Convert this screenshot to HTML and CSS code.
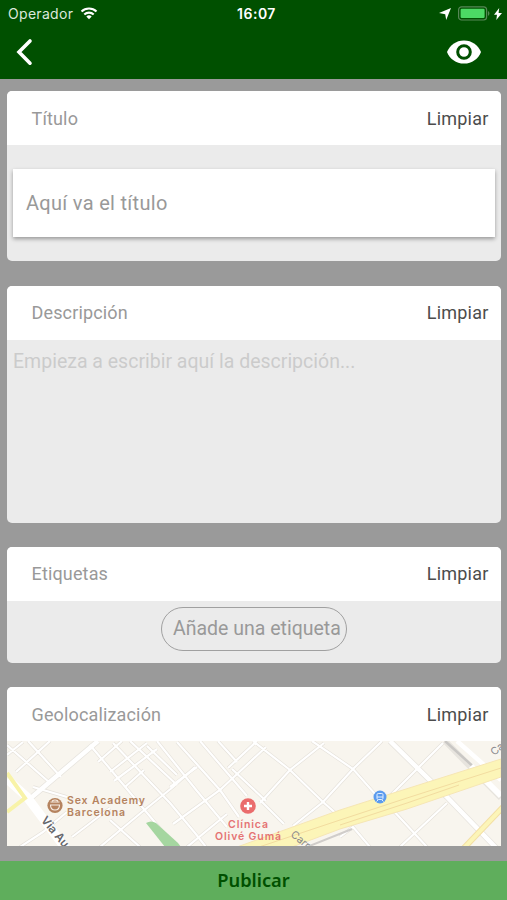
FILE: index.html
```
<!DOCTYPE html>
<html lang="es">
<head>
  <meta charset="UTF-8">
  <meta name="viewport" content="width=device-width, initial-scale=1">
  <title>Nueva publicación</title>
  <link rel="stylesheet" href="styles.css">
</head>
<body>
  <header class="header">
    <div class="status">
      <div class="status-left">
        <span class="carrier">Operador</span>
        <svg width="18" height="13" viewBox="0 0 17 13" fill="none" stroke="#fff" stroke-width="2.1">
          <path d="M1 4.6a10.8 10.8 0 0 1 15 0M3.8 7.5a6.8 6.8 0 0 1 9.4 0"/>
          <path d="M8.5 12.3L5.8 9.6a4 4 0 0 1 5.4 0z" fill="#fff" stroke="none"/>
        </svg>
      </div>
      <span class="time">16:07</span>
      <div class="status-right">
        <svg class="arrow" width="12" height="12" viewBox="0 0 12 12"><path d="M12 0L7.2 12 6.2 6.2 0 5z" fill="#fff"/></svg>
        <svg width="32" height="15" viewBox="0 0 32 15">
          <rect x=".6" y=".8" width="28" height="13.2" rx="3" fill="none" stroke="#578757" stroke-width="1.2"/>
          <rect x="2.6" y="2.8" width="24" height="9.2" rx="1.2" fill="#4cd964"/>
          <path d="M30 5v4.8c1.9-.7 1.9-4.1 0-4.8z" fill="#578757"/>
        </svg>
        <svg width="8" height="12" viewBox="0 0 8 12"><path d="M5.2 0L0 6.8h3L2.3 12 8 4.900H4.600z" fill="#fff"/></svg>
      </div>
    </div>
    <div class="nav">
      <svg width="18" height="28" viewBox="0 0 18 28"><path d="M15 3L4 14l11 11.2" fill="none" stroke="#fff" stroke-width="3.6" stroke-linecap="round"/></svg>
      <svg width="34" height="24" viewBox="0 0 34 24">
        <path d="M0 12C2.6 5.2 9 .4 17 .4S31.4 5.2 34 12c-2.6 6.8-9 11.6-17 11.6S2.6 18.8 0 12z" fill="#fff"/>
        <circle cx="17" cy="12" r="6.3" fill="none" stroke="#005000" stroke-width="3"/>
      </svg>
    </div>
  </header>

  <main class="content">
    <section class="card">
      <div class="card-head"><h2>Título</h2><button type="button">Limpiar</button></div>
      <div class="card-body title-body">
        <div class="title-input">Aquí va el título</div>
      </div>
    </section>

    <section class="card">
      <div class="card-head"><h2>Descripción</h2><button type="button">Limpiar</button></div>
      <div class="card-body desc-body">Empieza a escribir aquí la descripción...</div>
    </section>

    <section class="card">
      <div class="card-head"><h2>Etiquetas</h2><button type="button">Limpiar</button></div>
      <div class="card-body tags-body">
        <div class="tag-input">Añade una etiqueta</div>
      </div>
    </section>

    <section class="card map-card">
      <div class="card-head"><h2>Geolocalización</h2><button type="button">Limpiar</button></div>
      <!-- mapa -->
      <svg class="map" width="494" height="106" viewBox="0 0 494 106">
        <defs>
          <g id="streets">
            <path d="M0 4L43 42M21 0L54 36M0 14L16 1M9 31L43 0M83 4L146 79L168 106M106 2L163 62L188 92L199 106M123 0L170 44M140 5L170 34"/>
            <path d="M91 21L115 0M103 31L140 2M107 40L150 8M118 46L137 29M93 106L135 71L166 46L188 26M103 79L133 106M13 106L36 91L60 71M26 46L60 56M65 96L103 67"/>
            <path d="M150 0L190 50L220 86M170 1L213 49L232 76M193 0L240 55M211 0L230 21M246 0L283 29L316 61L333 76M166 83L213 49L259 6M163 46L190 26M221 27L250 0M253 62L283 29L317 2M253 59L277 83"/>
            <path d="M286 85L316 61L346 28L375 0M305 0L346 28L376 62M376 62L436 2M393 106L440 62M383 66L420 106M333 96L346 86L363 106M225 28L259 60M180 106L220 73"/>
          </g>
        </defs>
        <rect width="494" height="106" fill="#f8f5ee"/>
        <use href="#streets" fill="none" stroke="#e5e1da" stroke-width="3.4"/>
        <path d="M25 56L91 0M18 54L62 110M383 0L440 56L494 112M438 0L494 57" fill="none" stroke="#e7e4de" stroke-width="6"/>
        <use href="#streets" fill="none" stroke="#fff" stroke-width="2.2"/>
        <path d="M25 56L91 0M383 0L440 56L494 112M450 0L494 39" fill="none" stroke="#fff" stroke-width="4.5"/>
        <path d="M0 38L20 56L62 112" fill="none" stroke="#fff" stroke-width="9"/>
        <path d="M438 0L470 29" fill="none" stroke="#c9c7c4" stroke-width="2.5"/>
        <path d="M464 25L494 55" fill="none" stroke="#fff" stroke-width="6"/>
        <path d="M0 32L18 57L0 71" fill="none" stroke="#f8f3a8" stroke-width="4"/>
        <path d="M139 82q5-3 10 0l22 20 3 4h-16z" fill="#a5d6a0"/>
        <!-- avenida -->
        <path d="M230 106L333 69L380 54L494 18V36L400 68L333 88L285 106z" fill="#fcf5b8" stroke="#f6e6b4"/>
        <path d="M252 106L333 79L400 57L494 27M333 84L400 62L452 44" fill="none" stroke="#f2dca0"/>
        <path d="M300 106L345 88" stroke="#d0cdca" stroke-width="2"/>
        <path d="M456 108L496 66" stroke="#f3dfa4" stroke-width="6"/>
        <path d="M456 108L496 66" stroke="#fcf5b8" stroke-width="4"/>

        <circle cx="48" cy="64.5" r="7.6" fill="#b5835f"/>
        <path d="M43.5 61h9M43.5 64q0 5 4.5 5t4.5-5zM45 60q3-2 6 0" fill="none" stroke="#f8eee4" stroke-width="1.1"/>
        <g class="poi place">
          <text x="60" y="62.5" textLength="78">Sex Academy</text>
          <text x="60" y="74.5" textLength="58">Barcelona</text>
        </g>

        <circle cx="241" cy="65" r="7.8" fill="#ea6c6c"/>
        <path d="M241 61v8M237 65h8" stroke="#fff" stroke-width="2.4"/>
        <g class="poi clinic">
          <text x="241" y="86.5" textLength="40">Clínica</text>
          <text x="241" y="98.5" textLength="66">Olivé Gumá</text>
        </g>

        <circle cx="373" cy="56" r="6.5" fill="#5b9bee"/>
        <rect x="370" y="52.5" width="6" height="6" rx="1.2" fill="none" stroke="#e3efff"/>
        <path d="M370 56h6M371 59l-1.5 1.5M375 59l1.5 1.5" stroke="#e3efff"/>

        <text class="street main-street" transform="translate(33.5 79.5) rotate(50)">Via Au</text>
        <text class="street" transform="translate(283 94.500) rotate(40)">Carr</text>
        <text class="street" transform="translate(487 15) rotate(-38)">Ca</text>
      </svg>
    </section>
  </main>

  <button class="publish" type="button">Publicar</button>
</body>
</html>
```

FILE: styles.css
```
* {
  box-sizing: border-box;
}
body {
  margin: 0;
  height: 900px;
  display: flex;
  flex-direction: column;
  overflow: hidden;
  background: #9a9a9a;
  font-family: Roboto, sans-serif;
}
button {
  border: 0;
  padding: 0;
  background: none;
  font: inherit;
  color: inherit;
  cursor: pointer;
}
svg {
  display: block;
}

/* cabecera */
.header {
  height: 79px;
  flex: none;
  background: #005000;
  color: #fff;
}
.status {
  display: grid;
  grid-template-columns: 1fr auto 1fr;
  align-items: center;
  height: 27px;
  padding: 0 5px 0 8px;
  font-family: Inter, sans-serif;
  font-size: 14px;
}
.status-left,
.status-right {
  display: flex;
  align-items: center;
}
.status-left {
  gap: 7px;
}
.carrier {
  color: #dce8dc;
  letter-spacing: 0.3px;
}
.time {
  padding-left: 3px;
  font-weight: 600;
  letter-spacing: 0.5px;
}
.status-right {
  justify-content: flex-end;
  gap: 4px;
}
.arrow {
  margin-right: 3px;
}
.nav {
  display: flex;
  justify-content: space-between;
  align-items: center;
  height: 50px;
  padding: 0 26px 0 15px;
}

/* tarjetas */
.content {
  height: 767px;
  flex: none;
  display: flex;
  flex-direction: column;
  gap: 24.4px;
  padding: 12.2px 6px 0 7px;
  overflow: hidden;
}
.card {
  flex: none;
  border-radius: 5px;
  overflow: hidden;
  background: #ebebeb;
}
.map-card {
  border-radius: 5px 5px 0 0;
}
.card-head {
  display: flex;
  justify-content: space-between;
  align-items: center;
  height: 54px;
  padding: 0 12.5px 0 24.5px;
  background: #fff;
  font-size: 18px;
  letter-spacing: 0.15px;
  color: #4c4c4c;
}
.card-head h2 {
  margin: 0;
  font-size: 18px;
  font-weight: 400;
  color: #999;
}
.card-head button {
  letter-spacing: 0.2px;
}
.title-body {
  height: 116px;
  padding: 24px 6px;
}
.title-input {
  height: 68px;
  padding: 0 13px;
  line-height: 68px;
  background: #fff;
  box-shadow: 0 2px 4px rgba(0,0,0,0.35);
  font-size: 20px;
  letter-spacing: 0.3px;
  color: #999;
}
.desc-body {
  height: 183px;
  padding: 10px 6px;
  font-size: 19.5px;
  line-height: 24px;
  color: #cbcbcb;
}
.tags-body {
  height: 62px;
  padding-top: 6px;
}
.tag-input {
  width: 186px;
  height: 44px;
  margin: 0 auto;
  padding-left: 11px;
  border: 1px solid #a0a0a0;
  border-radius: 22px;
  line-height: 42px;
  font-size: 19.5px;
  color: #999;
  white-space: nowrap;
}

/* mapa */
.poi {
  font-family: Inter, sans-serif;
  font-size: 10.5px;
  font-weight: 600;
}
.place {
  fill: #b5835f;
}
.clinic {
  fill: #e57373;
  text-anchor: middle;
}
.street {
  font-family: Inter, sans-serif;
  font-size: 10.5px;
  fill: #88888c;
}
.main-street {
  font-size: 11.5px;
  font-weight: 600;
  fill: #66666a;
}

.publish {
  height: 39px;
  flex: none;
  margin-top: auto;
  padding-bottom: 2px;
  background: #5fae5c;
  font-family: "Noto Sans", sans-serif;
  font-size: 18.3px;
  font-weight: 600;
  color: #005000;
}
```
